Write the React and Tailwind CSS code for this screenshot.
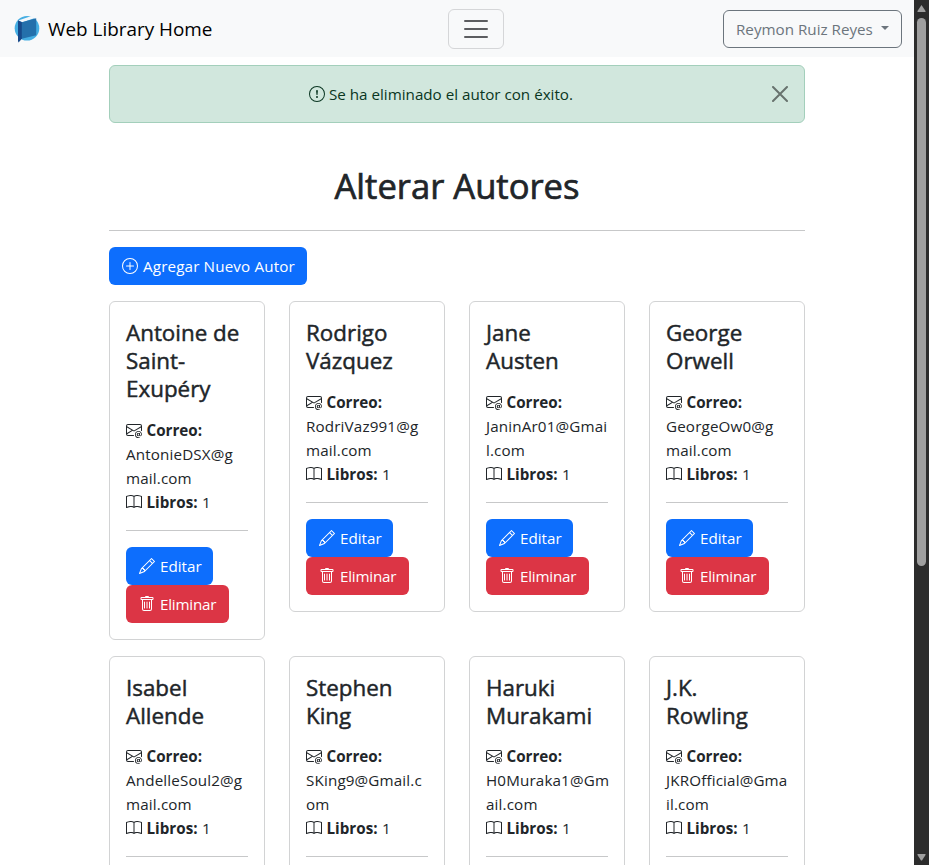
import {
  BsBook,
  BsEnvelopeAt,
  BsExclamationCircle,
  BsPencil,
  BsPlusCircle,
  BsTrash,
} from "react-icons/bs";

const authors = [
  { name: ["Antoine de", "Saint-", "Exupéry"], mail: ["AntonieDSX@g", "mail.com"] },
  { name: ["Rodrigo", "Vázquez"], mail: ["RodriVaz991@g", "mail.com"] },
  { name: ["Jane", "Austen"], mail: ["JaninAr01@Gmai", "l.com"] },
  { name: ["George", "Orwell"], mail: ["GeorgeOw0@g", "mail.com"] },
  { name: ["Isabel", "Allende"], mail: ["AndelleSoul2@g", "mail.com"] },
  { name: ["Stephen", "King"], mail: ["SKing9@Gmail.c", "om"] },
  { name: ["Haruki", "Murakami"], mail: ["H0Muraka1@Gm", "ail.com"] },
  { name: ["J.K.", "Rowling"], mail: ["JKROfficial@Gma", "il.com"] },
];

function Logo() {
  return (
    <svg width="30" height="30" viewBox="0 0 30 30" className="shrink-0">
      <circle cx="15" cy="14.200" r="12.300" fill="#45aee2" />
      <path d="M6.200 6.600 19.500 2 24.500 3.500 10.500 8.200Z" fill="#f4f8fb" />
      <path d="M6 6.200 10 8.200v16.400L6.600 28.400 6 27Z" fill="#17498a" />
      <path d="M9.800 8.200 24.200 4.200V21.200L9.800 24.800Z" fill="#2470ab" />
    </svg>
  );
}

function AuthorCard({ name, mail }) {
  return (
    <article className="rounded-md border border-[#d2d3d4] bg-white p-4">
      <h5 className="mb-[15px] pt-px text-[22.4px] leading-[27.83px] whitespace-nowrap [-webkit-text-stroke:0.45px_#212529]">
        {name.map((line) => (
          <span key={line} className="block">{line}</span>
        ))}
      </h5>
      <div className="whitespace-nowrap">
        <p className="flex h-6 items-center gap-[4.500px]">
          <BsEnvelopeAt className="size-4" />
          <b>Correo:</b>
        </p>
        <p className="tracking-[0.150px]">{mail[0]}</p>
        <p className="tracking-[0.150px]">{mail[1]}</p>
        <p className="flex h-6 items-center gap-[4.500px]">
          <BsBook className="size-4" />
          <b>Libros:</b>
          <span>1</span>
        </p>
      </div>
      <hr className="my-4 border-[#c7c8c9]" />
      <div className="flex flex-col items-start text-white">
        <button className="flex h-[38px] w-[87px] items-center gap-[5px] rounded-md bg-[#0d6efd] px-[13px]">
          <BsPencil className="size-4 shrink-0" />
          Editar
        </button>
        <button className="flex h-[38px] w-[103px] items-center gap-[5px] rounded-md bg-[#dc3545] px-[13px] tracking-[-0.200px]">
          <BsTrash className="size-4 shrink-0" />
          Eliminar
        </button>
      </div>
    </article>
  );
}

export default function App() {
  return (
    <div className="flex h-[865px] w-[929px] overflow-hidden bg-white font-['Open_Sans','Noto_Sans',sans-serif] text-[15.2px] leading-6 text-[#212529]">
      <div className="w-[914px] shrink-0">
        <nav className="flex h-[57px] items-center justify-between bg-[#f8f9fa] pr-3 pl-3">
          <div className="flex w-[200px] items-center gap-[6px] text-[18.9px] whitespace-nowrap text-black">
            <Logo />
            <span>Web Library Home</span>
          </div>
          <button className="ml-[17px] flex h-10 w-14 items-center justify-center rounded-md border border-[#d5d6d8]">
            <svg width="30" height="30" viewBox="0 0 30 30" stroke="#5c5d60" strokeWidth="2" strokeLinecap="round">
              <path d="M4 7h22M4 15h22M4 23h22" />
            </svg>
          </button>
          <button className="flex h-[38px] w-[179px] items-center justify-between rounded-md border border-[#6c757d] px-3 whitespace-nowrap text-[#6c757d]">
            Reymon Ruiz Reyes
            <span className="mb-px border-x-[4.8px] border-t-[4.8px] border-x-transparent border-t-[#6c757d]" />
          </button>
        </nav>
        <main className="mx-auto mt-2 w-[696px]">
          <div className="flex h-[58px] items-center rounded-md border border-[#a3cfbb] bg-[#d1e7dd] px-4 text-[#0a3622]">
            <div className="mr-4 flex flex-1 items-center justify-center gap-1">
              <BsExclamationCircle className="size-4" />
              <span>Se ha eliminado el autor con éxito.</span>
            </div>
            <svg width="16" height="16" viewBox="0 0 16 16" stroke="#68736e" strokeWidth="2" strokeLinecap="round">
              <path d="m1 1 14 14M15 1 1 15" />
            </svg>
          </div>
          <h1 className="mt-[41px] text-center text-[34.6px] leading-[43px] [-webkit-text-stroke:0.7px_#212529]">
            Alterar Autores
          </h1>
          <hr className="mt-[23px] mb-4 border-[#c7c8c9]" />
          <button className="flex h-[38px] w-[198px] items-center gap-[5px] rounded-md bg-[#0d6efd] px-[13px] tracking-[0.150px] whitespace-nowrap text-white">
            <BsPlusCircle className="size-4 shrink-0" />
            Agregar Nuevo Autor
          </button>
          <section className="mt-[16.200px] grid grid-cols-4 items-start gap-x-6 gap-y-4">
            {authors.map((author) => (
              <AuthorCard key={author.mail[0]} {...author} />
            ))}
          </section>
        </main>
      </div>
      <aside className="flex w-[15px] flex-col items-center bg-[#2c2c2c]">
        <svg width="15" height="18" viewBox="0 0 15 18" fill="#9f9f9f">
          <path d="M7.5 5 11.5 11Q12 12 11 12H4Q3 12 3.5 11Z" />
        </svg>
        <div className="h-[548px] w-[9px] rounded-full bg-[#9f9f9f]" />
        <svg width="15" height="15" viewBox="0 0 15 15" fill="#9f9f9f" className="mt-auto">
          <path d="M3.5 5Q3 4 4 4H11Q12 4 11.500 5L8 10.500H7Z" />
        </svg>
      </aside>
    </div>
  );
}
